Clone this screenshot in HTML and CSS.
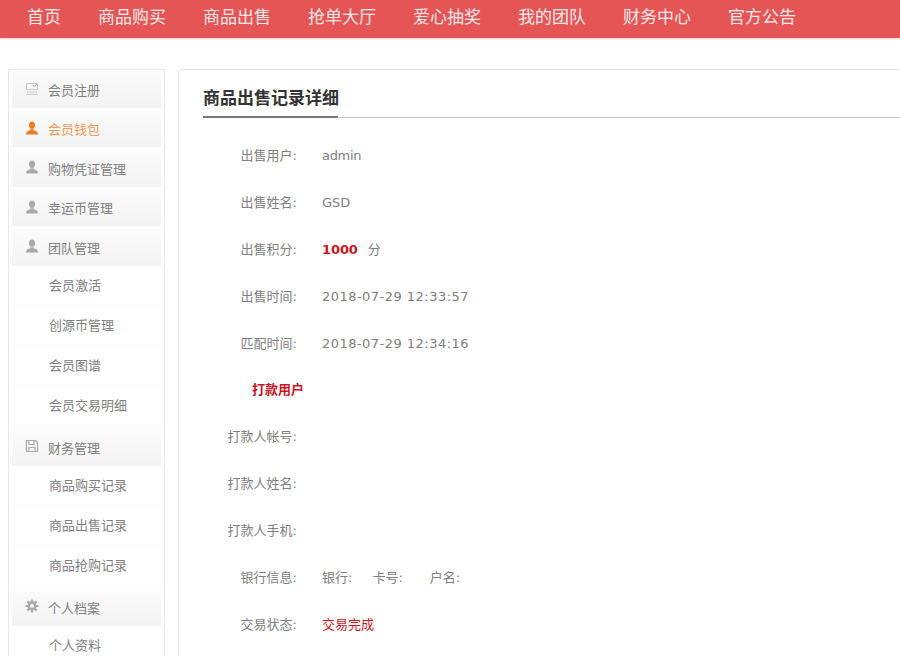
FILE: index.html
```html
<!DOCTYPE html>
<html lang="zh-CN">
<head>
<meta charset="utf-8">
<title>商品出售记录详细</title>
<link rel="stylesheet" href="styles.css">
</head>
<body>
<nav class="topnav">
  <a>首页</a><a>商品购买</a><a>商品出售</a><a>抢单大厅</a><a>爱心抽奖</a><a>我的团队</a><a>财务中心</a><a>官方公告</a>
</nav>
<div class="layout">
  <aside class="side">
    <div class="head"><svg class="ico" viewBox="0 0 14 14"><path d="M1.5 1.5h11v6h-11z M2 10h10M1 12.5h12" fill="none" stroke="#c8c8c8"/><path d="M8 3l1.5 2 2-3" fill="none" stroke="#aaa"/></svg>会员注册</div>
    <div class="head on"><svg class="ico" viewBox="0 0 14 14"><ellipse cx="7" cy="4.2" rx="3" ry="3.7"/><path d="M1 13.5c0-2.6 1.2-3.2 3.8-4 .5-.2.7-.7.5-1.2h3.4c-.2.5 0 1 .5 1.2 2.6.8 3.8 1.4 3.8 4z"/></svg>会员钱包</div>
    <div class="head"><svg class="ico" viewBox="0 0 14 14"><ellipse cx="7" cy="4.2" rx="3" ry="3.7"/><path d="M1 13.5c0-2.6 1.2-3.2 3.8-4 .5-.2.7-.7.5-1.2h3.4c-.2.5 0 1 .5 1.2 2.6.8 3.8 1.4 3.8 4z"/></svg>购物凭证管理</div>
    <div class="head"><svg class="ico" viewBox="0 0 14 14"><ellipse cx="7" cy="4.2" rx="3" ry="3.7"/><path d="M1 13.5c0-2.6 1.2-3.2 3.8-4 .5-.2.7-.7.5-1.2h3.4c-.2.5 0 1 .5 1.2 2.6.8 3.8 1.4 3.8 4z"/></svg>幸运币管理</div>
    <div class="head"><svg class="ico" viewBox="0 0 14 14"><ellipse cx="7" cy="4.2" rx="3" ry="3.7"/><path d="M1 13.5c0-2.6 1.2-3.2 3.8-4 .5-.2.7-.7.5-1.2h3.4c-.2.5 0 1 .5 1.2 2.6.8 3.8 1.4 3.8 4z"/></svg>团队管理</div>
    <div class="sub">会员激活</div>
    <div class="sub">创源币管理</div>
    <div class="sub">会员图谱</div>
    <div class="sub">会员交易明细</div>
    <div class="head"><svg class="ico" viewBox="0 0 14 14"><path d="M1.5 1.5h9l2 2v9h-11z M4 1.5v4h5v-4 M4 12.5v-4h6v4" fill="none" stroke="#aaa" stroke-width="1.2"/></svg>财务管理</div>
    <div class="sub">商品购买记录</div>
    <div class="sub">商品出售记录</div>
    <div class="sub">商品抢购记录</div>
    <div class="head"><svg class="ico" viewBox="0 0 14 14"><path d="M7 .5v13M.5 7h13M2.4 2.4l9.2 9.2M11.6 2.4l-9.2 9.2" stroke="#aaa" stroke-width="2.2"/><circle cx="7" cy="7" r="4.4" fill="#aaa"/><circle cx="7" cy="7" r="2" fill="#f5f5f5"/></svg>个人档案</div>
    <div class="sub">个人资料</div>
  </aside>
  <main class="panel">
    <h1 class="title"><span>商品出售记录详细</span></h1>
    <dl class="rows">
      <div class="row"><dt>出售用户:</dt><dd class="user">admin</dd></div>
      <div class="row"><dt>出售姓名:</dt><dd>GSD</dd></div>
      <div class="row"><dt>出售积分:</dt><dd class="score"><b class="pts">1000</b><span>分</span></dd></div>
      <div class="row"><dt>出售时间:</dt><dd class="date">2018-07-29 12:33:57</dd></div>
      <div class="row"><dt>匹配时间:</dt><dd class="date">2018-07-29 12:34:16</dd></div>
      <div class="row"><dt class="red">打款用户</dt><dd></dd></div>
      <div class="row"><dt>打款人帐号:</dt><dd></dd></div>
      <div class="row"><dt>打款人姓名:</dt><dd></dd></div>
      <div class="row"><dt>打款人手机:</dt><dd></dd></div>
      <div class="row"><dt>银行信息:</dt><dd class="bank"><span>银行:</span><span>卡号:</span><span>户名:</span></dd></div>
      <div class="row"><dt>交易状态:</dt><dd class="status">交易完成</dd></div>
    </dl>
  </main>
</div>
</body>
</html>
```
FILE: styles.css
```css
* { box-sizing: border-box; }
html, body { margin: 0; height: 656px; overflow: hidden; background: #fff; }
body { font-family: "DejaVu Sans", "Noto Sans CJK SC", sans-serif; font-size: 13px; color: #808080; }
.topnav { height: 38px; background: #e55555; box-shadow: 0 1px 2px rgba(200,80,80,.25); display: flex; padding-left: 27px; gap: 37px; }
.topnav a { color: #fbe9e9; font-family: "Noto Sans CJK SC", sans-serif; font-size: 17px; line-height: 32px; }
.layout { display: flex; align-items: flex-start; padding: 31px 0 0 8px; gap: 13px; }
.side { width: 157px; flex: none; border: 1px solid #e8e8e8; border-bottom: 0; padding: 1px 3px 0; font-family: "Noto Sans CJK SC", sans-serif; }
.head { height: 37px; margin-bottom: 2.4px; padding-left: 13px; display: flex; align-items: center; gap: 9px; background: linear-gradient(#fbfbfb, #f3f3f3); color: #808080; }
.head .ico { width: 14px; height: 14px; flex: none; fill: #aaa; margin-top: -2px; }
.head.on { color: #f09a55; }
.head.on .ico { fill: #ef7d22; }
.head + .sub { margin-top: -2.4px; }
.sub { height: 40px; padding-left: 37px; line-height: 38px; border-bottom: 1px solid #f8f8f8; color: #808080; }
.sub + .head { margin-top: 3px; }
.panel { flex: 1; margin-right: -10px; height: 640px; border: 1px solid #e8e8e8; border-radius: 3px 0 0 0; padding: 0 0 0 24px; }
.title { margin: 0; height: 48px; border-bottom: 1px solid #cfcfcf; font-size: 17px; font-family: "Noto Sans CJK SC", sans-serif; font-weight: 700; color: #333; line-height: 54px; display: flex; }
.title span { display: block; height: 48px; width: 135px; white-space: nowrap; border-bottom: 2px solid #777; }
.rows { margin: 14px 0 0; }
.row { display: flex; height: 46.9px; align-items: center; }
.row dt { width: 94px; flex: none; text-align: right; margin-top: -2px; margin-right: 1px; }
.row dd { margin: 0 0 0 24px; white-space: nowrap; }
.row dt.red { width: 101px; font-weight: 700; color: #c81623; }
.user { letter-spacing: -.3px; }
.date { letter-spacing: .47px; }
.row .score { margin-top: -2px; }
.pts { color: #c81623; margin-right: 10px; letter-spacing: -.1px; }
.row .bank { margin-top: -2px; }
.bank span:nth-child(1) { margin-right: 20px; }
.bank span:nth-child(2) { margin-right: 27px; }
.row .status { color: #d0121b; margin-top: -2px; }
```
